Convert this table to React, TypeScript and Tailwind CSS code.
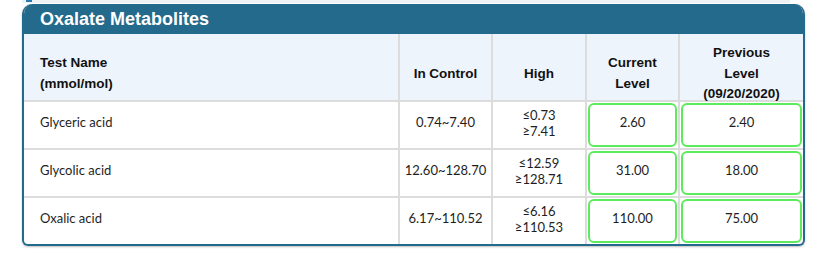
import React from 'react';

const rows = [
  { name: 'Glyceric acid', control: '0.74~7.40', high: ['≤0.73', '≥7.41'], current: '2.60', previous: '2.40' },
  { name: 'Glycolic acid', control: '12.60~128.70', high: ['≤12.59', '≥128.71'], current: '31.00', previous: '18.00' },
  { name: 'Oxalic acid', control: '6.17~110.52', high: ['≤6.16', '≥110.53'], current: '110.00', previous: '75.00' },
];

const grid = 'grid grid-cols-[374px_93px_94px_93px_125px]';

function ValueBox({ value }: { value: string }) {
  return (
    <div className="border-l-2 border-[#dcdcdc] p-[1px] h-full">
      <div className="h-full border-2 border-[#5ceb5c] rounded-[6px] flex items-center justify-center pb-[4px]">
        {value}
      </div>
    </div>
  );
}

export default function App() {
  return (
    <div className="w-[836px] h-[264px] bg-white">
      {/* scrolled-off strip from the previous panel */}
      <div className="relative ml-[22px] w-[768px] h-[3px] bg-[#eef2f5]">
        <div className="absolute left-[4px] top-0 w-[6px] h-[2px] bg-[#2a7ab0]" />
      </div>

      <div className="ml-[22px] mt-[1px] w-[783px] rounded-t-[10px] rounded-b-[6px] border-2 border-t-0 border-[#236a8c] overflow-hidden shadow-[0_1px_2px_rgba(0,0,0,0.25)]">
        <div className="h-[30px] bg-[#236a8c] pl-[16px] flex items-center">
          <h2 className="text-white text-[18px] font-bold leading-none font-['Liberation_Sans',Arial,sans-serif]">
            Oxalate Metabolites
          </h2>
        </div>

        <div className={`${grid} h-[66px] bg-[#eef4fc] text-[13.5px] font-bold leading-[20.5px] text-[#111] font-['Liberation_Sans',Arial,sans-serif]`}>
          <div className="pl-[16px] pt-[9px] flex flex-col justify-center">
            <span>Test Name</span>
            <span>(mmol/mol)</span>
          </div>
          <div className="border-l-2 border-[#dcdcdc] pt-[9px] flex items-center justify-center">In Control</div>
          <div className="border-l-2 border-[#dcdcdc] pt-[9px] flex items-center justify-center">High</div>
          <div className="border-l-2 border-[#dcdcdc] pt-[9px] flex flex-col items-center justify-center">
            <span>Current</span>
            <span>Level</span>
          </div>
          <div className="border-l-2 border-[#dcdcdc] pt-[9px] flex flex-col items-center justify-center">
            <span>Previous</span>
            <span>Level</span>
            <span>(09/20/2020)</span>
          </div>
        </div>

        {rows.map((r) => (
          <div
            key={r.name}
            className={`${grid} h-[48px] border-t-2 border-[#dcdcdc] text-[13px] text-[#1e1e1e] font-['Lato',sans-serif]`}
          >
            <div className="pl-[16px] pb-[4px] flex items-center">{r.name}</div>
            <div className="border-l-2 border-[#dcdcdc] pb-[4px] flex items-center justify-center">{r.control}</div>
            <div className="border-l-2 border-[#dcdcdc] pb-[3px] flex flex-col items-center justify-center leading-[15.5px]">
              <span>{r.high[0]}</span>
              <span>{r.high[1]}</span>
            </div>
            <ValueBox value={r.current} />
            <ValueBox value={r.previous} />
          </div>
        ))}
      </div>
    </div>
  );
}
